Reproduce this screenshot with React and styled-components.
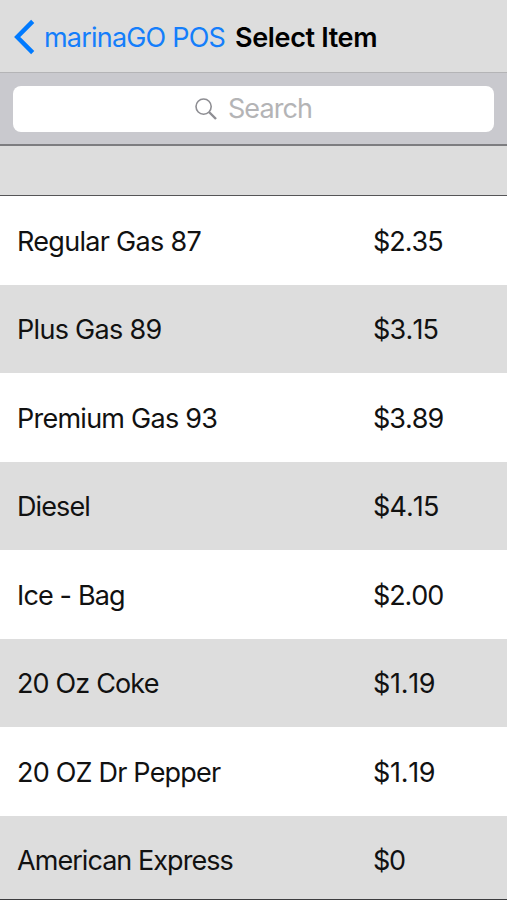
import React from 'react'
import styled, { createGlobalStyle } from 'styled-components'

const GlobalStyle = createGlobalStyle`
  body {
    margin: 0;
    background: #ffffff;
    font-family: Inter, "Liberation Sans", sans-serif;
  }
`
const Screen = styled.div`
  display: flex;
  flex-direction: column;
  width: 507px;
  height: 900px;
  box-sizing: border-box;
  overflow: hidden;
  border-bottom: 1px solid #3c3c3e;
`
const NavBar = styled.header`
  display: flex;
  align-items: center;
  flex: none;
  height: 73px;
  padding: 2px 0 0 14px;
  box-sizing: border-box;
  background: #dddddd;
  border-bottom: 1px solid #b4b4b6;
`
const BackButton = styled.button`
  display: flex;
  align-items: center;
  gap: 9px;
  padding: 0;
  border: none;
  background: none;
  color: #147efb;
  font-family: inherit;
`
const BackLabel = styled.span`
  width: 191px;
  padding-top: 2px;
  font-size: 27px;
  line-height: 32px;
  letter-spacing: -0.8px;
  text-align: left;
  white-space: nowrap;
`
const Title = styled.h1`
  margin: 0;
  padding-top: 2px;
  color: #000000;
  font-size: 27px;
  font-weight: 600;
  line-height: 32px;
  letter-spacing: -0.35px;
  white-space: nowrap;
`
const SearchBar = styled.div`
  flex: none;
  height: 73px;
  padding: 13px 13px 0;
  box-sizing: border-box;
  background: #c9c9ce;
  border-bottom: 2px solid #7d7d80;
`
const SearchField = styled.div`
  display: flex;
  align-items: center;
  justify-content: center;
  gap: 11px;
  height: 46px;
  border-radius: 8px;
  background: #ffffff;
`
const Placeholder = styled.span`
  color: #b4b4b6;
  font-size: 27px;
  line-height: 32px;
  letter-spacing: -0.9px;
`
const SectionHeader = styled.div`
  flex: none;
  height: 50px;
  box-sizing: border-box;
  background: #dddddd;
  border-bottom: 1px solid #555557;
`
const ItemList = styled.ul`
  margin: 0;
  padding: 0;
  list-style: none;
`
const Item = styled.li`
  display: grid;
  grid-template-columns: 356px 1fr;
  align-items: center;
  height: 88.5px;
  padding: 3px 0 0 17px;
  box-sizing: border-box;
  background: ${props => (props.$shaded ? '#dddddd' : '#ffffff')};
  color: #111111;
  font-size: 27px;
  line-height: 32px;
  white-space: nowrap;
`
const ItemName = styled.span`
  letter-spacing: ${props => props.$tracking}px;
`
const Price = styled.span`
  font-kerning: none;
  letter-spacing: ${props => props.$tracking}px;
`

const items = [
  { name: 'Regular Gas 87', price: '$2.35', tracking: -0.7, priceTracking: -1 },
  { name: 'Plus Gas 89', price: '$3.15', tracking: -0.7, priceTracking: -0.8 },
  { name: 'Premium Gas 93', price: '$3.89', tracking: -0.75, priceTracking: -1 },
  { name: 'Diesel', price: '$4.15', tracking: -0.9, priceTracking: -0.9 },
  { name: 'Ice - Bag', price: '$2.00', tracking: -0.85, priceTracking: -1.1 },
  { name: '20 Oz Coke', price: '$1.19', tracking: -0.85, priceTracking: -0.3 },
  { name: '20 OZ Dr Pepper', price: '$1.19', tracking: -0.8, priceTracking: -0.3 },
  { name: 'American Express', price: '$0', tracking: -0.95, priceTracking: -1.2 },
]

const BackIcon = () => (
  <svg width="21" height="36" viewBox="0 0 21 36" fill="none">
    <path d="M18.7 2.4 3.2 18 18.7 33.6" stroke="#007aff" strokeWidth="4.4" />
  </svg>
)

const SearchIcon = () => (
  <svg width="22" height="22" viewBox="0 0 22 22" fill="none" stroke="#8e8e93">
    <circle cx="8.6" cy="8.6" r="7.6" strokeWidth="1.6" />
    <path d="M14 14 21 21" strokeWidth="2.4" />
  </svg>
)

const App = () => (
  <>
    <GlobalStyle />
    <Screen>
      <NavBar>
        <BackButton type="button">
          <BackIcon />
          <BackLabel>marinaGO POS</BackLabel>
        </BackButton>
        <Title>Select Item</Title>
      </NavBar>
      <SearchBar>
        <SearchField>
          <SearchIcon />
          <Placeholder>Search</Placeholder>
        </SearchField>
      </SearchBar>
      <SectionHeader />
      <ItemList>
        {items.map((item, index) => (
          <Item key={item.name} $shaded={index % 2 === 1}>
            <ItemName $tracking={item.tracking}>{item.name}</ItemName>
            <Price $tracking={item.priceTracking}>{item.price}</Price>
          </Item>
        ))}
      </ItemList>
    </Screen>
  </>
)

export default App
